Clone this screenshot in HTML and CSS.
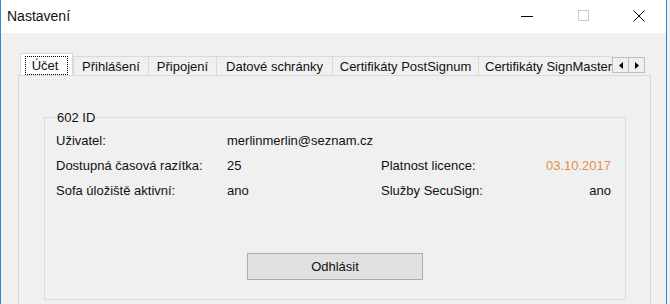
FILE: index.html
```html
<!DOCTYPE html>
<html lang="cs">
<head>
<meta charset="utf-8">
<link rel="stylesheet" href="styles.css">
</head>
<body>
<div class="window">
  <div class="titlebar">
    <div class="title">Nastavení</div>
    <div class="controls">
      <span class="ctl min"><svg width="12" height="12" viewBox="0 0 12 12"><line x1="0" y1="6.5" x2="12" y2="6.5" stroke="#000" stroke-width="1"/></svg></span>
      <span class="ctl max"><svg width="12" height="12" viewBox="0 0 12 12"><rect x="0.5" y="0.5" width="10" height="10" fill="none" stroke="#cccccc" stroke-width="1"/></svg></span>
      <span class="ctl close"><svg width="12" height="12" viewBox="0 0 12 12"><path d="M0.5 0.5 L11.5 11.5 M11.5 0.5 L0.5 11.5" stroke="#000" stroke-width="1"/></svg></span>
    </div>
  </div>
  <div class="client">
    <div class="tabs">
      <div class="strip">
        <div class="tab sel t1"><span class="focus">Účet</span></div>
        <div class="tab t2">Přihlášení</div>
        <div class="tab t3">Připojení</div>
        <div class="tab t4">Datové schránky</div>
        <div class="tab t5">Certifikáty PostSignum</div>
        <div class="tab t6">Certifikáty SignMaster</div>
      </div>
      <div class="scroller">
        <span class="arrow"><svg width="4" height="7" viewBox="0 0 4 7"><path d="M4 0 L0 3.5 L4 7 Z" fill="#000"/></svg></span>
        <span class="arrow"><svg width="4" height="7" viewBox="0 0 4 7"><path d="M0 0 L4 3.5 L0 7 Z" fill="#000"/></svg></span>
      </div>
    </div>
    <div class="panel">
      <fieldset class="group">
        <legend>602 ID</legend>
        <div class="grid">
          <div>Uživatel:</div><div>merlinmerlin@seznam.cz</div><div></div><div></div>
          <div>Dostupná časová razítka:</div><div>25</div><div>Platnost licence:</div><div class="val orange">03.10.2017</div>
          <div>Sofa úložiště aktivní:</div><div>ano</div><div>Služby SecuSign:</div><div class="val">ano</div>
        </div>
        <div class="btnrow"><button class="btn">Odhlásit</button></div>
      </fieldset>
    </div>
  </div>
</div>
</body>
</html>
```
FILE: styles.css
```css
* { box-sizing: border-box; }
html, body { margin: 0; padding: 0; }
body {
  width: 670px;
  height: 304px;
  overflow: hidden;
  background: #f0f0f0;
  font-family: "Liberation Sans", Arial, sans-serif;
  font-size: 13px;
  color: #111;
}
.window {
  width: 667px;
  height: 304px;
  border-left: 1px solid #2b88d8;
  border-right: 1px solid #2b88d8;
  background: #f0f0f0;
}
.titlebar {
  height: 33px;
  background: #fff;
  display: flex;
  align-items: center;
  justify-content: space-between;
}
.title {
  padding-left: 6px;
  font-size: 14px;
  padding-bottom: 1px;
}
.controls {
  display: flex;
  height: 100%;
}
.ctl {
  display: flex;
  align-items: center;
  padding-bottom: 1px;
}
.ctl.min { width: 57px; }
.ctl.max { width: 55px; }
.ctl.close { width: 33px; }
.client {
  padding: 20px 15px 0 17px;
}
.tabs {
  position: relative;
  height: 22px;
  width: 633px;
}
.strip {
  display: flex;
  align-items: flex-end;
  height: 22px;
  padding-left: 2px;
  width: 595px;
  overflow: hidden;
}
.tab {
  flex: none;
  height: 19px;
  border: 1px solid #d9d9d9;
  border-bottom: none;
  margin-left: -1px;
  background: #f0f0f0;
  display: flex;
  align-items: center;
  justify-content: center;
  white-space: nowrap;
  line-height: 1;
  padding-top: 1px;
}
.tab.t1 {
  height: 22px;
  width: 53px;
  margin-left: 0;
  background: #fff;
  position: relative;
  z-index: 1;
}
.tab.t2 { width: 76px; margin-left: 0; }
.tab.t3 { width: 69px; }
.tab.t4 { width: 117px; }
.tab.t5 { width: 147px; }
.tab.t6 { width: 150px; justify-content: flex-start; padding-left: 6px; }
.focus {
  border: 1px dotted #000;
  padding: 2px 9px 2px 6px;
}
.scroller {
  position: absolute;
  left: 595px;
  top: 4px;
  display: flex;
}
.arrow {
  width: 17px;
  height: 16px;
  border: 1px solid #bdbdbd;
  background: #f0f0f0;
  margin-left: -1px;
  display: flex;
  align-items: center;
  justify-content: center;
}
.panel {
  border: 1px solid #d9d9d9;
  height: 240px;
  width: 633px;
  padding: 34px 0 0 25px;
}
.group {
  margin: 0;
  width: 582px;
  height: 190px;
  border: 1px solid #dcdcdc;
  padding: 3px 0 0 11px;
}
legend {
  padding: 0 1px;
  margin-left: 0;
}
.grid {
  display: grid;
  grid-template-columns: 171px 154px 150px 80px;
  grid-auto-rows: 25px;
  align-items: center;
}
.val { text-align: right; }
.orange { color: #e0904c; }
.btnrow {
  padding: 50px 0 0 191px;
}
.btn {
  width: 176px;
  height: 27px;
  background: #e1e1e1;
  border: 1px solid #adadad;
  font: inherit;
  color: #111;
  padding: 0;
}
```
